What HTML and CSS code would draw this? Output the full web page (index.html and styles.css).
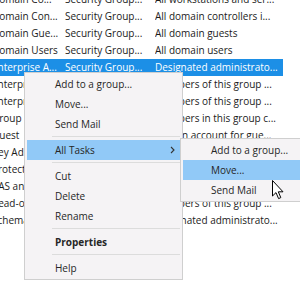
FILE: index.html
```html
<!DOCTYPE html>
<html>
<head>
<meta charset="utf-8">
<link rel="stylesheet" href="styles.css">
</head>
<body>
<div class="list">
  <div class="row"><span>Domain Co...</span><span>Security Group...</span><span>All workstations and ser...</span></div>
  <div class="row"><span>Domain Con...</span><span>Security Group...</span><span>All domain controllers i...</span></div>
  <div class="row"><span>Domain Gue...</span><span>Security Group...</span><span>All domain guests</span></div>
  <div class="row"><span>Domain Users</span><span>Security Group...</span><span>All domain users</span></div>
  <div class="row sel"><span>Enterprise A...</span><span>Security Group...</span><span>Designated administrato...</span></div>
  <div class="row"><span>Enterprise K...</span><span>Security Group...</span><span>Members of this group ...</span></div>
  <div class="row"><span>Enterprise R...</span><span>Security Group...</span><span>Members of this group ...</span></div>
  <div class="row"><span>Group Polic...</span><span>Security Group...</span><span>Members in this group c...</span></div>
  <div class="row"><span>Guest</span><span>User</span><span>Built-in account for gue...</span></div>
  <div class="row"><span>Key Admins</span><span>Security Group...</span><span>Members of this group ...</span></div>
  <div class="row"><span>Protected U...</span><span>Security Group...</span><span>Members of this group ...</span></div>
  <div class="row"><span>RAS and IAS...</span><span>Security Group...</span><span>Servers in this group c...</span></div>
  <div class="row"><span>Read-only D...</span><span>Security Group...</span><span>Members of this group ...</span></div>
  <div class="row"><span>Schema Ad...</span><span>Security Group...</span><span>Designated administrato...</span></div>
</div>

<div class="menu">
  <div class="item">Add to a group...</div>
  <div class="item">Move...</div>
  <div class="item">Send Mail</div>
  <div class="sep"></div>
  <div class="item hl">All Tasks
    <svg class="chev" width="5" height="8" viewBox="0 0 5 8"><polyline points="1,1 4,4 1,7" fill="none" stroke="#333" stroke-width="1.1"/></svg>
  </div>
  <div class="sep"></div>
  <div class="item">Cut</div>
  <div class="item">Delete</div>
  <div class="item">Rename</div>
  <div class="sep"></div>
  <div class="item bold">Properties</div>
  <div class="sep"></div>
  <div class="item">Help</div>
</div>

<div class="menu sub">
  <div class="item">Add to a group...</div>
  <div class="item hl">Move...</div>
  <div class="item">Send Mail</div>
</div>

<svg class="cursor" width="13" height="20" viewBox="0 0 13 20">
  <path d="M0.5,0.5 L0.5,16 L4,12.6 L6.6,18.6 L8.8,17.6 L6.3,11.8 L11,11.8 Z" fill="#fff" stroke="#000" stroke-width="1" stroke-linejoin="miter"/>
</svg>
</body>
</html>
```
FILE: styles.css
```css
html, body {
  margin: 0;
  padding: 0;
}
body {
  width: 300px;
  height: 300px;
  overflow: hidden;
  position: relative;
  background: #ffffff;
  font-family: "Open Sans", "Noto Sans", sans-serif;
  font-size: 10px;
  color: #1b1b1b;
}
.list {
  margin-top: -9px;
  margin-left: -8px;
  width: 291px;
}
.row {
  display: grid;
  grid-template-columns: 73px 90px 1fr;
  height: 17px;
  line-height: 17px;
  white-space: nowrap;
}
.row span {
  overflow: hidden;
}
.row.sel {
  background: #1c8fe6;
  color: #ffffff;
}
.menu {
  position: absolute;
  left: 24px;
  top: 72px;
  width: 159px;
  box-sizing: border-box;
  background: #f5f3f5;
  border: 1px solid #cfcfcf;
  padding: 1px 2px;
  color: #262626;
}
.menu.sub {
  left: 180px;
  top: 138px;
  width: 130px;
}
.item {
  position: relative;
  height: 20px;
  line-height: 20px;
  padding-left: 28px;
  white-space: nowrap;
}
.item.hl {
  background: #91c9f7;
}
.item.bold {
  font-weight: bold;
}
.sep {
  height: 1px;
  background: #dcdcdc;
  margin: 2px 0 3px 25px;
}
.chev {
  position: absolute;
  right: 5px;
  top: 6px;
}
.cursor {
  position: absolute;
  left: 272px;
  top: 180px;
}
```
